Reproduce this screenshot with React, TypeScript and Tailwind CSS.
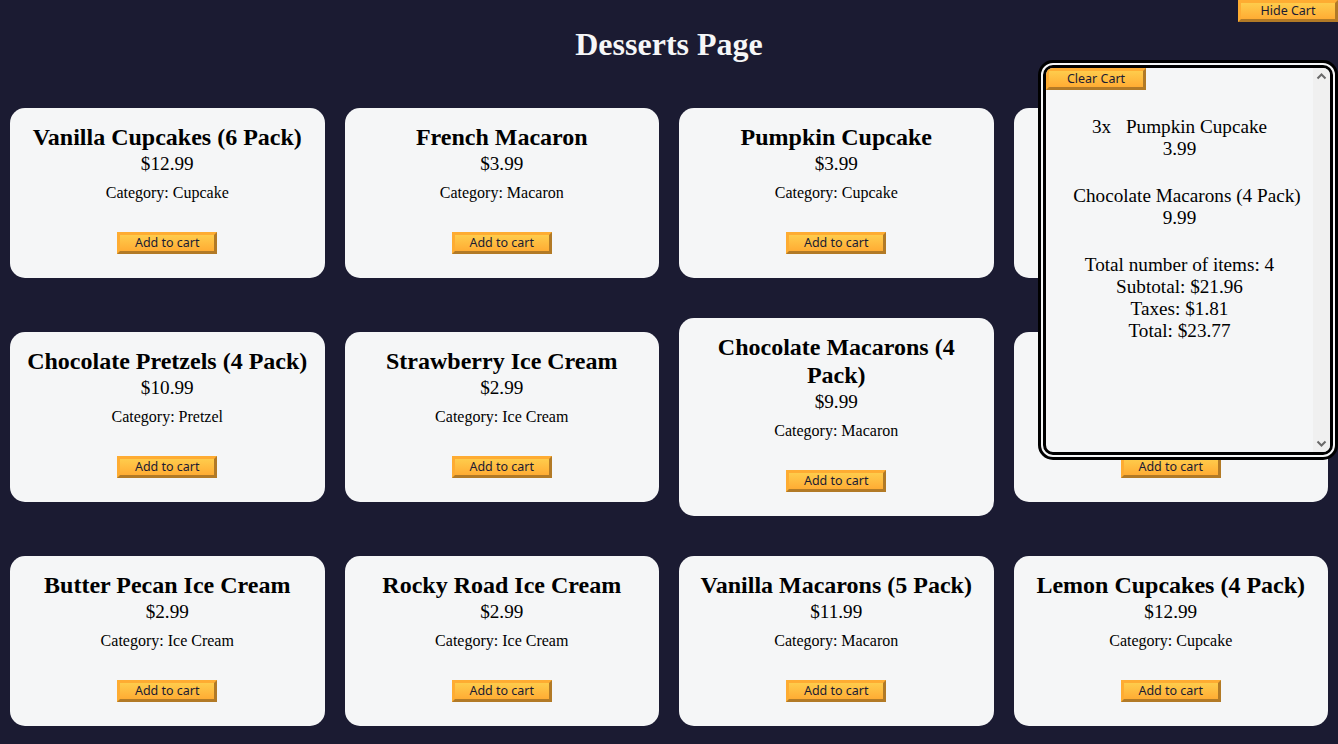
const desserts = [
  { name: "Vanilla Cupcakes (6 Pack)", price: "12.99", category: "Cupcake" },
  { name: "French Macaron", price: "3.99", category: "Macaron" },
  { name: "Pumpkin Cupcake", price: "3.99", category: "Cupcake" },
  { name: "Chocolate Cupcake", price: "5.99", category: "Cupcake" },
  { name: "Chocolate Pretzels (4 Pack)", price: "10.99", category: "Pretzel" },
  { name: "Strawberry Ice Cream", price: "2.99", category: "Ice Cream" },
  { name: "Chocolate Macarons (4 Pack)", price: "9.99", category: "Macaron" },
  { name: "Strawberry Pretzel", price: "4.99", category: "Pretzel" },
  { name: "Butter Pecan Ice Cream", price: "2.99", category: "Ice Cream" },
  { name: "Rocky Road Ice Cream", price: "2.99", category: "Ice Cream" },
  { name: "Vanilla Macarons (5 Pack)", price: "11.99", category: "Macaron" },
  { name: "Lemon Cupcakes (4 Pack)", price: "12.99", category: "Cupcake" },
];

const btn =
  "w-[100px] h-[22px] cursor-pointer font-['Noto_Sans',sans-serif] text-[12.5px] leading-[16px] text-[#1b1b32] bg-gradient-to-b from-[#fecc4c] to-[#ffac33] border-[3px] border-solid border-t-[#feac32] border-l-[#feac32] border-r-[#b27a26] border-b-[#b27a26]";

const Chevron = ({ up }: { up?: boolean }) => (
  <svg width="11" height="7" viewBox="0 0 11 7" className="mx-auto">
    <path
      d={up ? "M1.5 5.5 L5.5 1.5 L9.5 5.5" : "M1.5 1.5 L5.5 5.5 L9.5 1.5"}
      fill="none"
      stroke="#6a6a6a"
      strokeWidth="2"
    />
  </svg>
);

const App = () => {
  return (
    <div className="relative min-h-screen bg-[#1b1b32] font-['Liberation_Serif',serif] text-black">
      <button className={`${btn} absolute top-0 right-0`}>Hide Cart</button>

      {/* cart */}
      <div className="absolute top-[60px] right-0 w-[300px] h-[400px] bg-[#f5f6f7] border-[8px] border-double border-black rounded-[15px] flex overflow-hidden z-10">
        <div className="flex-1 text-center text-[19.2px] leading-[22px]">
          <button className={`${btn} block`}>Clear Cart</button>
          <div className="pt-[1px]">
            <div className="my-[25px]">
              <p>
                <span className="inline-block mr-[10px]">3x</span> Pumpkin Cupcake
              </p>
              <p>3.99</p>
            </div>
            <div className="my-[25px]">
              <p>
                <span className="inline-block mr-[10px]"></span> Chocolate Macarons (4 Pack)
              </p>
              <p>9.99</p>
            </div>
          </div>
          <p>Total number of items: 4</p>
          <p>Subtotal: $21.96</p>
          <p>Taxes: $1.81</p>
          <p>Total: $23.77</p>
        </div>
        <div className="w-[17px] bg-[#f0f0f0] flex flex-col justify-between py-[5px]">
          <Chevron up />
          <Chevron />
        </div>
      </div>

      <h1 className="text-center text-[#f5f6f7] text-[32px] leading-[38px] font-bold py-[25px]">Desserts Page</h1>

      <div className="flex flex-wrap justify-evenly items-center">
        {desserts.map((d) => (
          <div
            key={d.name}
            className="grow shrink-0 basis-[21%] mx-[10px] my-5 p-[15px] bg-[#f5f6f7] rounded-[15px] text-center"
          >
            <h2 className="text-[24px] leading-[28px] font-bold">{d.name}</h2>
            <p className="text-[19.2px] leading-[22px] pt-[2px]">${d.price}</p>
            <p className="text-[16px] leading-[18px] mt-[9px] mb-[10px]">Category: {d.category}</p>
            <button className={`${btn} block mx-auto mt-[30px] mb-[9px]`}>Add to cart</button>
          </div>
        ))}
      </div>
    </div>
  );
};

export default App;
